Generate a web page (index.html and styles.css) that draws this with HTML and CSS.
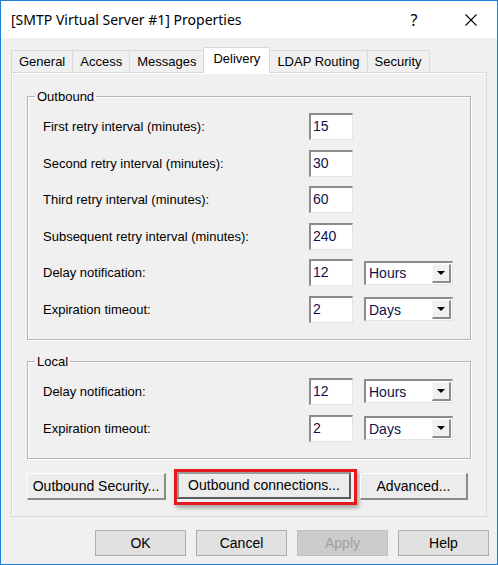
FILE: index.html
```html
<!DOCTYPE html>
<html lang="en">
<head>
    <meta charset="UTF-8">
    <title>[SMTP Virtual Server #1] Properties</title>
    <link rel="stylesheet" href="styles.css">
</head>
<body>

<div class="window">
    <div class="titlebar">
        <span class="title">[SMTP Virtual Server #1] Properties</span>
        <span class="help">?</span>
        <span class="close">
            <svg width="12" height="12" viewBox="0 0 12 12"><path d="M0.5 0.5 L11.5 11.5 M11.5 0.5 L0.5 11.5" stroke="#000" stroke-width="1.1" fill="none"/></svg>
        </span>
    </div>

    <div class="tabs">
        <div class="tab">General</div>
        <div class="tab">Access</div>
        <div class="tab">Messages</div>
        <div class="tab active">Delivery</div>
        <div class="tab">LDAP Routing</div>
        <div class="tab">Security</div>
    </div>

    <div class="page">
        <fieldset class="group">
            <legend>Outbound</legend>
            <div class="fields">
                <label>First retry interval (minutes):</label>
                <div class="textbox">15</div>
                <span></span>

                <label>Second retry interval (minutes):</label>
                <div class="textbox">30</div>
                <span></span>

                <label>Third retry interval (minutes):</label>
                <div class="textbox">60</div>
                <span></span>

                <label>Subsequent retry interval (minutes):</label>
                <div class="textbox">240</div>
                <span></span>

                <label>Delay notification:</label>
                <div class="textbox">12</div>
                <div class="combo"><span>Hours</span><span class="arrow"></span></div>

                <label>Expiration timeout:</label>
                <div class="textbox">2</div>
                <div class="combo"><span>Days</span><span class="arrow"></span></div>
            </div>
        </fieldset>

        <fieldset class="group local">
            <legend>Local</legend>
            <div class="fields">
                <label>Delay notification:</label>
                <div class="textbox">12</div>
                <div class="combo"><span>Hours</span><span class="arrow"></span></div>

                <label>Expiration timeout:</label>
                <div class="textbox">2</div>
                <div class="combo"><span>Days</span><span class="arrow"></span></div>
            </div>
        </fieldset>

        <div class="actions">
            <button class="classic sec">Outbound Security...</button>
            <span class="highlight"><button class="classic conn">Outbound connections...</button></span>
            <button class="classic adv">Advanced...</button>
        </div>
    </div>

    <div class="footer">
        <button class="flat">OK</button>
        <button class="flat">Cancel</button>
        <button class="flat" disabled>Apply</button>
        <button class="flat">Help</button>
    </div>
</div>

</body>
</html>
```

FILE: styles.css
```css
body {
    margin: 0;
    font-family: "Liberation Sans", Arial, sans-serif;
    font-size: 13px;
    color: #000;
}

.window {
    width: 498px;
    height: 565px;
    box-sizing: border-box;
    border: 1px solid #1c7fd6;
    background-color: #f0f0f0;
}

.titlebar {
    height: 37px;
    background-color: white;
    display: flex;
    align-items: center;
}

.title {
    font-family: "Noto Sans", sans-serif;
    font-size: 14px;
    margin-left: 10px;
    flex: 1;
}

.help {
    font-family: "Noto Sans", sans-serif;
    font-size: 16px;
    width: 46px;
    margin-right: 11px;
    text-align: center;
}

.close {
    width: 46px;
    margin-right: 3px;
    display: flex;
    justify-content: center;
}

.tabs {
    display: flex;
    align-items: flex-end;
    margin: 9px 10px 0 10px;
    height: 25px;
}

.tab {
    height: 22px;
    line-height: 21px;
    padding: 0 7px;
    box-sizing: border-box;
    border: 1px solid #d9d9d9;
    border-bottom: none;
    border-right: none;
    background-color: #f0f0f0;
}

.tab:nth-child(6) {
    border-right: 1px solid #d9d9d9;
}

.tab.active {
    height: 26px;
    line-height: 22px;
    background-color: white;
    border-right: 1px solid #d9d9d9;
    margin-bottom: -1px;
    padding: 0 9px;
    position: relative;
    z-index: 1;
}

.tab.active + .tab {
    border-left: none;
}

.page {
    margin: 0 10px;
    height: 445px;
    box-sizing: border-box;
    border: 1px solid #d9d9d9;
    box-shadow: inset 1px 1px 0 white;
    padding: 16px 15px 0 15px;
}

.group {
    margin: 0;
    border: 1px solid #b4b4b4;
    box-shadow: inset 1px 1px 0 white, 1px 1px 0 white;
    padding: 9px 15px 16px 15px;
}

.group legend {
    padding: 0 2px;
    margin-left: -8px;
    line-height: 15px;
}

.group.local {
    margin-top: 14px;
}

.fields {
    display: grid;
    grid-template-columns: 255px 44px 89px;
    grid-auto-rows: 27px;
    column-gap: 11px;
    row-gap: 9.6px;
    align-items: center;
}

.textbox {
    height: 27px;
    box-sizing: border-box;
    background: white;
    border-style: solid;
    border-width: 2px 1px 1px 2px;
    border-color: #8c8c8c #e3e3e3 #e3e3e3 #8c8c8c;
    padding: 2px 0 0 2px;
    color: #10104a;
    font-size: 14px;
    line-height: 18px;
}

.combo {
    height: 24px;
    box-sizing: border-box;
    background: white;
    border-style: solid;
    border-width: 2px 1px 1px 2px;
    border-color: #8c8c8c #e3e3e3 #e3e3e3 #8c8c8c;
    display: flex;
    align-items: center;
    justify-content: space-between;
    padding-left: 3px;
    color: #10104a;
    font-size: 14px;
}

.arrow {
    width: 19px;
    height: 19px;
    margin-right: 1px;
    box-sizing: border-box;
    background-color: #f0f0f0;
    border-style: solid;
    border-width: 1px 2px 2px 1px;
    border-color: #f8f8f8 #8c8c8c #8c8c8c #f8f8f8;
    display: flex;
    align-items: center;
    justify-content: center;
}

.arrow::after {
    content: "";
    border-left: 4px solid transparent;
    border-right: 4px solid transparent;
    border-top: 4px solid #000;
}

.actions {
    display: flex;
    align-items: center;
    margin-top: 10px;
}

button {
    font-family: "Liberation Sans", Arial, sans-serif;
    font-size: 14px;
    color: #000;
    margin: 0;
    padding: 0;
}

.classic {
    height: 27px;
    background-color: #ececec;
    border-style: solid;
    border-width: 1px 2px 2px 1px;
    border-color: #fdfdfd #8a8a8a #8a8a8a #fdfdfd;
}

.sec {
    width: 139px;
}

.highlight {
    display: flex;
    margin-left: 8px;
    margin-right: 3px;
    border: 3px solid #e6191f;
    padding: 0 3px 3px 0;
    box-shadow: 2px 3px 4px rgba(0, 0, 0, 0.3);
}

.conn {
    width: 174px;
    border-width: 2px;
    border-color: #9a9a9a #5a5a5a #5a5a5a #9a9a9a;
}

.adv {
    width: 108px;
}

.footer {
    display: flex;
    justify-content: flex-end;
    gap: 10px;
    margin: 13px 8px 0 0;
}

.flat {
    width: 91px;
    height: 26px;
    background-color: #e1e1e1;
    border: 1px solid #adadad;
}

.flat:disabled {
    background-color: #cccccc;
    border-color: #bfbfbf;
    color: #a0a0a0;
}
```
